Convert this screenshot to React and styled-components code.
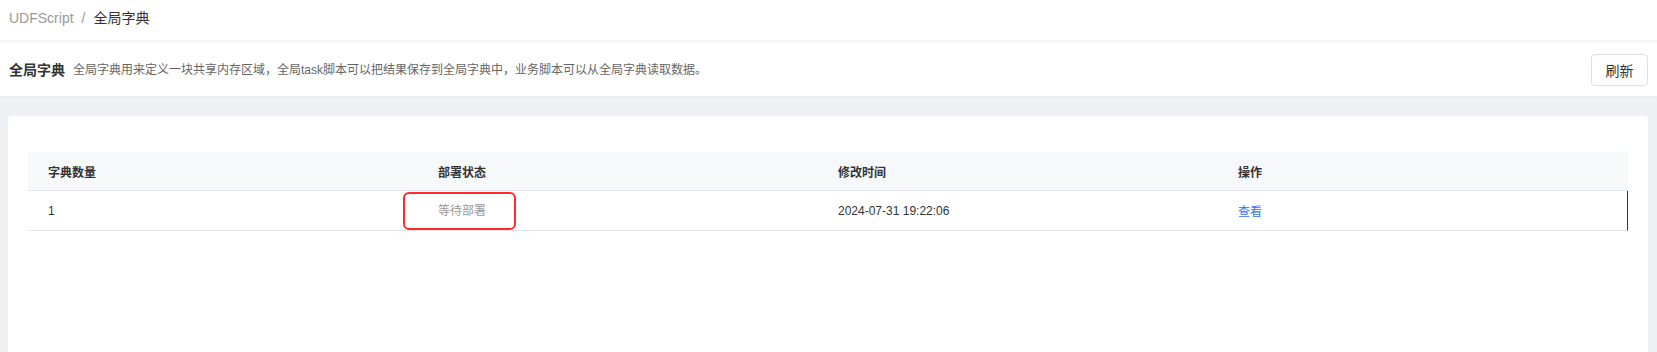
import styled, { createGlobalStyle } from 'styled-components';

const GlobalStyle = createGlobalStyle`
  html, body {
    margin: 0;
    padding: 0;
    background: #eef0f4;
    font-family: "Liberation Sans", "Noto Sans CJK SC", sans-serif;
    color: #333;
  }
  * { box-sizing: border-box; }
`;

const Page = styled.div`
  min-height: 352px;
  display: flex;
  flex-direction: column;
`;

const Breadcrumb = styled.div`
  height: 40px;
  background: #fff;
  display: flex;
  align-items: center;
  padding: 0 9px 4px;
  font-size: 14px;
  line-height: 16px;
`;

const Crumb = styled.span`
  color: ${p => (p.$current ? '#333' : '#999')};
`;

const Sep = styled.span`
  color: #999;
  margin: 0 8px;
`;

const Header = styled.div`
  height: 56px;
  background: #fff;
  border-top: 3px solid #f7f7f8;
  display: flex;
  align-items: center;
  padding: 0 9px;
  box-shadow: 0 1px 3px rgba(0, 0, 0, 0.04);
`;

const Title = styled.h3`
  margin: 0 8px 0 0;
  font-size: 14px;
  font-weight: bold;
  line-height: 18px;
  color: #333;
`;

const Desc = styled.span`
  font-size: 12px;
  line-height: 16px;
  color: #666;
  flex: 1;
`;

const Button = styled.button`
  width: 57px;
  height: 32px;
  border: 1px solid #dcdfe6;
  border-radius: 4px;
  background: #fff;
  color: #333;
  font-family: inherit;
  font-size: 14px;
  padding: 0;
  cursor: pointer;
`;

const Card = styled.div`
  flex: 1;
  margin: 20px 9px 0 8px;
  background: #fff;
  border-radius: 4px 4px 0 0;
  padding: 36px 20px 0;
  min-height: 236px;
`;

const Table = styled.div`
  display: grid;
  grid-template-columns: repeat(4, 1fr);
  font-size: 12px;
`;

const Th = styled.div`
  height: 39px;
  display: flex;
  align-items: center;
  background: #f7f8fa;
  font-weight: bold;
  color: #333;
  border-bottom: 1px solid #e4e4ec;
  padding-left: ${p => (p.$first ? '20px' : '10px')};
`;

const Td = styled.div`
  height: 40px;
  display: flex;
  align-items: center;
  border-bottom: 1px solid #e4e4ec;
  padding-left: ${p => (p.$first ? '20px' : '10px')};
  color: ${p => p.$color || '#333'};
  border-right: ${p => (p.$last ? '1px solid #333' : 'none')};
`;

const Marked = styled.span`
  position: relative;
  line-height: 16px;

  &::after {
    content: '';
    position: absolute;
    left: -35px;
    right: -30px;
    top: -11px;
    bottom: -11px;
    border: 2px solid #ff2a2a;
    border-radius: 6px;
  }
`;

const Link = styled.a`
  color: #3a6ff7;
  cursor: pointer;
`;

export default function App() {
  return (
    <Page>
      <GlobalStyle />
      <Breadcrumb>
        <Crumb>UDFScript</Crumb>
        <Sep>/</Sep>
        <Crumb $current>全局字典</Crumb>
      </Breadcrumb>
      <Header>
        <Title>全局字典</Title>
        <Desc>全局字典用来定义一块共享内存区域，全局task脚本可以把结果保存到全局字典中，业务脚本可以从全局字典读取数据。</Desc>
        <Button>刷新</Button>
      </Header>
      <Card>
        <Table>
          <Th $first>字典数量</Th>
          <Th>部署状态</Th>
          <Th>修改时间</Th>
          <Th>操作</Th>
          <Td $first>1</Td>
          <Td $color="#999"><Marked>等待部署</Marked></Td>
          <Td>2024-07-31 19:22:06</Td>
          <Td $last><Link>查看</Link></Td>
        </Table>
      </Card>
    </Page>
  );
}
